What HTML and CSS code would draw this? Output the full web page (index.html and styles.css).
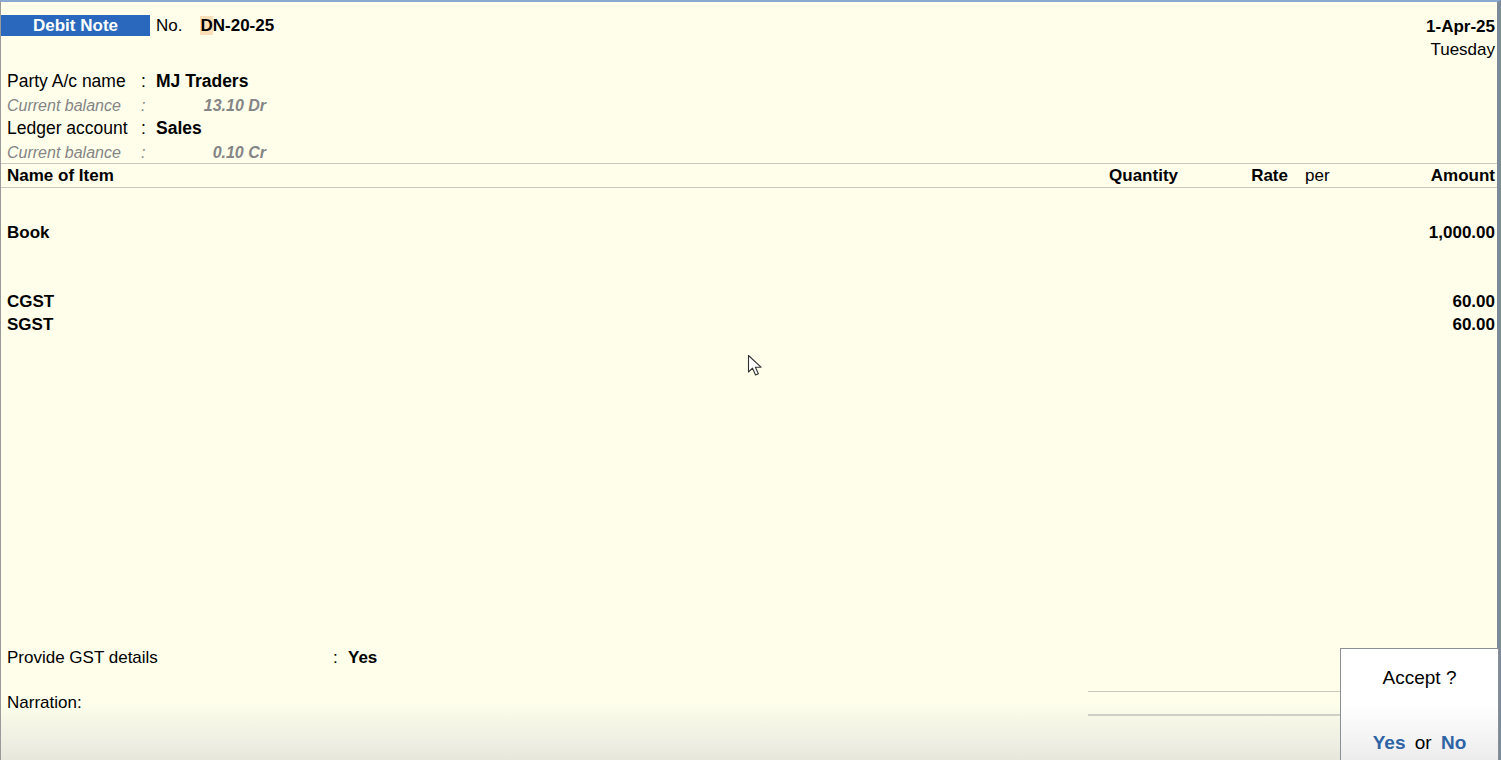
FILE: index.html
```html
<!DOCTYPE html>
<html lang="en">
<head>
  <meta charset="UTF-8">
  <title>Debit Note</title>
  <link rel="stylesheet" href="styles.css">
</head>
<body>
  <div class="screen">
    <div class="voucher">
      <div class="top">
        <div class="top-left">
          <span class="vtype">Debit Note</span>
          <span class="no">No.</span>
          <span class="vno"><span class="caret">D</span>N-20-25</span>
        </div>
        <div class="top-right">
          <div class="date">1-Apr-25</div>
          <div class="day">Tuesday</div>
        </div>
      </div>

      <div class="party">
        <div class="field">
          <span class="label">Party A/c name</span>
          <span class="colon">:</span>
          <span class="value">MJ Traders</span>
        </div>
        <div class="field sub">
          <span class="label">Current balance</span>
          <span class="colon">:</span>
          <span class="bal">13.10 Dr</span>
        </div>
        <div class="field">
          <span class="label">Ledger account</span>
          <span class="colon">:</span>
          <span class="value">Sales</span>
        </div>
        <div class="field sub">
          <span class="label">Current balance</span>
          <span class="colon">:</span>
          <span class="bal">0.10 Cr</span>
        </div>
      </div>

      <div class="items-head">
        <span class="c-name">Name of Item</span>
        <span class="c-qty">Quantity</span>
        <span class="c-rate">Rate</span>
        <span class="c-per">per</span>
        <span class="c-amt">Amount</span>
      </div>

      <div class="items">
        <div class="row item"><span>Book</span><span>1,000.00</span></div>
        <div class="taxes">
          <div class="row"><span>CGST</span><span>60.00</span></div>
          <div class="row"><span>SGST</span><span>60.00</span></div>
        </div>
      </div>

      <div class="footer">
        <div class="gst">
          <span class="gst-label">Provide GST details</span>
          <span class="colon">:</span>
          <span class="value">Yes</span>
        </div>
        <div class="narration">Narration:</div>
        <div class="totals">
          <div class="line thin"></div>
          <div class="line thick"></div>
        </div>
      </div>
    </div>

    <div class="accept">
      <div class="accept-q">Accept ?</div>
      <div class="accept-a"><b>Yes</b> or <b>No</b></div>
    </div>

    <svg class="pointer" width="18" height="24" viewBox="0 0 18 24">
      <path d="M1.5 1.5 L1.5 18 L5.5 14.2 L8.6 21 L11.4 19.7 L8.4 13.2 L14 13.2 Z" fill="#fff" stroke="#333" stroke-width="1.1" stroke-linejoin="round"/>
    </svg>
  </div>
</body>
</html>
```

FILE: styles.css
```css
* { box-sizing: border-box; }

body {
  margin: 0;
  font-family: "Liberation Sans", Arial, sans-serif;
  font-size: 17px;
  color: #000;
  background: #fefeeb;
  overflow: hidden;
}

.screen {
  position: relative;
  width: 1501px;
  height: 760px;
  border-top: 2px solid #8aaad4;
  border-left: 1px solid #9a9a9a;
  border-right: 4px solid #7d8b99;
  background: linear-gradient(to bottom, #fefeeb 0, #fefeeb 700px, #eeeee2 740px, #e6e6dc 760px);
}

.voucher {
  display: flex;
  flex-direction: column;
  height: 100%;
}

/* header */
.top {
  display: flex;
  justify-content: space-between;
  padding-top: 13px;
  padding-right: 2px;
}

.top-left {
  display: flex;
  align-items: center;
  height: 21px;
}

.vtype {
  width: 149px;
  height: 21px;
  line-height: 21px;
  background: #2968bc;
  color: #fff;
  font-weight: bold;
  text-align: center;
}

.no {
  margin-left: 6px;
}

.vno {
  margin-left: 18px;
  font-weight: bold;
}

.caret {
  background: #fcdfb6;
}

.top-right {
  text-align: right;
  line-height: 23px;
}

.date {
  font-weight: bold;
}

/* party */
.party {
  padding: 8px 0 0 6px;
  font-size: 17.5px;
}

.field {
  display: flex;
  height: 24px;
  line-height: 24px;
}

.field.sub {
  height: 23px;
  line-height: 26px;
  font-size: 16px;
  font-style: italic;
  color: #858585;
}

.label {
  width: 134px;
}

.colon {
  width: 15px;
}

.value {
  font-weight: bold;
}

.bal {
  width: 110px;
  text-align: right;
  font-weight: bold;
}

/* item table */
.items-head {
  display: flex;
  height: 25px;
  line-height: 23px;
  border-top: 1px solid #c8c8bc;
  border-bottom: 1px solid #c8c8bc;
  padding: 0 2px 0 6px;
  font-weight: bold;
}

.c-name { flex: 1; }
.c-qty { width: 90px; text-align: right; }
.c-rate { width: 110px; text-align: right; }
.c-per { width: 60px; padding-left: 17px; font-weight: normal; }
.c-amt { width: 147px; text-align: right; }

.items {
  flex: 1;
  padding: 33px 2px 0 6px;
  font-weight: bold;
}

.row {
  display: flex;
  justify-content: space-between;
  height: 23px;
  line-height: 23px;
}

.taxes {
  margin-top: 46px;
}

/* footer */
.footer {
  position: relative;
  height: 114px;
  padding-left: 6px;
}

.gst {
  display: flex;
  height: 24px;
  line-height: 24px;
}

.gst-label {
  width: 326px;
}

.narration {
  margin-top: 21px;
  line-height: 24px;
}

.totals {
  position: absolute;
  left: 1087px;
  top: 45px;
  width: 255px;
}

.line.thin {
  border-top: 1px solid #c8c8bc;
}

.line.thick {
  margin-top: 22px;
  border-top: 2px solid #cfcfc6;
}

/* accept box */
.accept {
  position: absolute;
  right: -2px;
  bottom: 0;
  width: 159px;
  height: 112px;
  border: 1px solid #8a8f96;
  border-bottom: none;
  background: linear-gradient(to bottom, #ffffff 0, #ffffff 55px, #ececec 112px);
  text-align: center;
}

.accept-q {
  margin-top: 18px;
  font-size: 19px;
}

.accept-a {
  margin-top: 43px;
  font-size: 19px;
}

.accept-a b {
  color: #2e64a6;
  margin: 0 4px;
}

.pointer {
  position: absolute;
  left: 746px;
  top: 352px;
}
```
